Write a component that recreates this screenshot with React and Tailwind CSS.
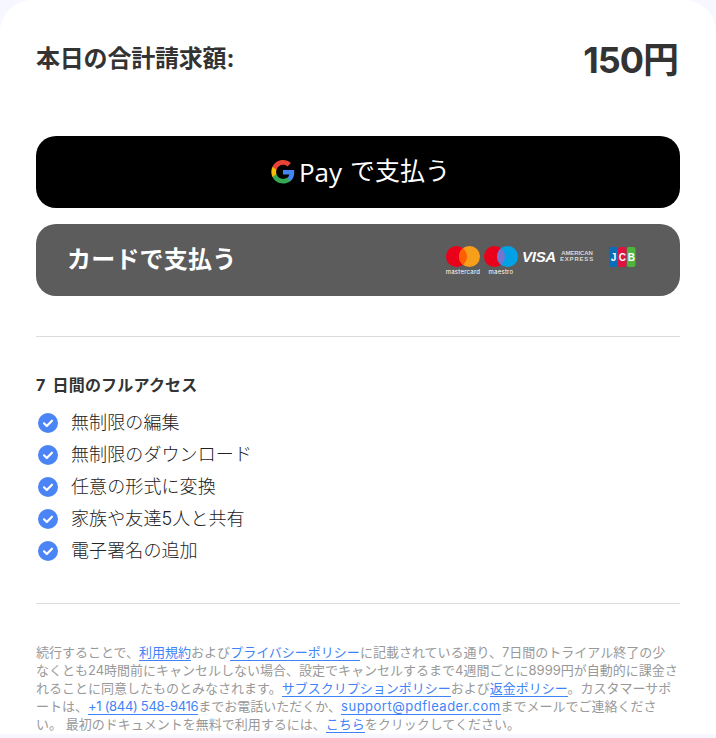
import React from "react";

const features = [
  "無制限の編集",
  "無制限のダウンロード",
  "任意の形式に変換",
  "家族や友達5人と共有",
  "電子署名の追加",
];

const font = "font-['Inter','Noto_Sans_CJK_JP',sans-serif]";

const GoogleG = () => (
  <svg width="24" height="24" viewBox="0 0 48 48">
    <path fill="#4285F4" d="M46.5 24.5c0-1.6-.1-3.1-.4-4.5H24v9h12.7c-.6 2.9-2.2 5.400-4.700 7v5.800h7.600c4.400-4.100 6.900-10.100 6.900-17.300z" />
    <path fill="#34A853" d="M24 47c6.300 0 11.600-2.100 15.600-5.700L32 35.500c-2.100 1.400-4.800 2.300-8 2.300-6.100 0-11.300-4.100-13.100-9.700H3v6C7 42 14.900 47 24 47z" />
    <path fill="#FBBC05" d="M10.900 28.100c-.5-1.400-.7-2.900-.7-4.400s.3-3 .7-4.400v-6H3C1.500 16.500.6 20 .6 23.700s.9 7.200 2.400 10.400l7.900-6z" />
    <path fill="#EA4335" d="M24 9.500c3.500 0 6.600 1.200 9 3.500l6.800-6.800C35.600 2.400 30.300 0 24 0 14.900 0 7 5.300 3 13.300l7.900 6C12.700 13.700 17.900 9.500 24 9.500z" />
  </svg>
);

const Check = () => (
  <svg width="20" height="20" viewBox="0 0 20 20" className="shrink-0 mt-[2px]">
    <circle cx="10" cy="10" r="10" fill="#4a84f5" />
    <path d="M6 10.300l2.800 2.700L14 7.700" fill="none" stroke="#fff" strokeWidth="2.200" strokeLinecap="round" strokeLinejoin="round" />
  </svg>
);

const Cards = () => (
  <div className="flex items-center">
    <div className="flex flex-col items-center w-[34px]">
      <svg width="34" height="21" viewBox="0 0 34 21">
        <circle cx="10.500" cy="10.500" r="10.500" fill="#eb001b" />
        <circle cx="23.500" cy="10.500" r="10.500" fill="#f79e1b" />
        <path d="M17 2.300a10.500 10.500 0 0 1 0 16.400a10.500 10.500 0 0 1 0-16.400z" fill="#ff5f00" />
      </svg>
      <span className="text-[6px] leading-[7px] tracking-[0.25px] text-white mt-[1px] font-['Inter',sans-serif]">mastercard</span>
    </div>
    <div className="flex flex-col items-center w-[34px] ml-[4px]">
      <svg width="34" height="21" viewBox="0 0 34 21">
        <circle cx="10.500" cy="10.500" r="10.500" fill="#eb001b" />
        <circle cx="23.500" cy="10.500" r="10.500" fill="#00a2e5" />
        <path d="M17 2.300a10.500 10.500 0 0 1 0 16.400a10.500 10.500 0 0 1 0-16.400z" fill="#7375cf" />
      </svg>
      <span className="text-[6px] leading-[7px] tracking-[0.25px] text-white mt-[1px] font-['Inter',sans-serif]">maestro</span>
    </div>
    <span className="w-[34px] ml-[4px] mb-[8px] text-white text-[15px] leading-none font-extrabold italic tracking-[-0.3px] font-['Liberation_Sans',sans-serif]">VISA</span>
    <div className="w-[34px] ml-[4px] mb-[8px] flex flex-col items-center text-[#d8d8d8] text-[6px] leading-[6px] font-bold font-['Liberation_Sans',sans-serif]">
      <span className="tracking-[-0.1px]">AMERICAN</span>
      <span className="tracking-[0.8px]">EXPRESS</span>
    </div>
    <svg width="27" height="20" viewBox="0 0 27 20" className="ml-[15px] mb-[6px]">
      <rect x="0" y="0" width="8.500" height="20" rx="2" fill="#0b6cb8" />
      <rect x="9" y="0" width="8.500" height="20" rx="2" fill="#e0123f" />
      <rect x="18" y="0" width="8.500" height="20" rx="2" fill="#4fb43c" />
      <text x="4.500" y="14" fontSize="10" fontWeight="700" fill="#fff" textAnchor="middle" fontFamily="Liberation Sans">J</text>
      <text x="13.300" y="14" fontSize="10" fontWeight="700" fill="#fff" textAnchor="middle" fontFamily="Liberation Sans">C</text>
      <text x="22.300" y="14" fontSize="10" fontWeight="700" fill="#fff" textAnchor="middle" fontFamily="Liberation Sans">B</text>
    </svg>
  </div>
);

const Link = ({ children, className = "" }) => (
  <a href="#" className={`text-[#3f83f8] border-b border-[#3f83f8] ${className}`}>{children}</a>
);

export default function App() {
  return (
    <div className={`h-[738px] w-[716px] overflow-hidden bg-[#f7f8ff] ${font}`}>
      <div className="h-[734px] bg-white rounded-t-[32px] px-[36px] pt-[38px]">
        <div className="flex justify-between items-start text-[#333]">
          <div className="text-[24px] leading-[42px] font-bold tracking-[-0.2px]">本日の合計請求額:</div>
          <div className="mr-[2px] text-[36px] leading-[44px] font-bold tracking-[-1px]">150円</div>
        </div>

        <button className="mt-[54px] w-full h-[72px] bg-black rounded-[20px] flex items-center justify-center pl-[5px] text-white">
          <GoogleG />
          <span className="ml-[4px] text-[26px] leading-none font-['Open_Sans',sans-serif]">Pay</span>
          <span className="ml-[8px] mb-[2px] text-[25px] leading-none">で支払う</span>
        </button>

        <button className="mt-[16px] w-full h-[72px] bg-[#5c5c5c] rounded-[20px] flex items-center justify-between pl-[31px] pr-[44px] text-white">
          <span className="text-[24px] font-bold tracking-[0.2px]">カードで支払う</span>
          <Cards />
        </button>

        <div className="mt-[40px] border-t border-[#dcdcdc]" />

        <div className="mt-[36px] text-[16px] leading-[24px] font-bold tracking-[0.2px] text-[#333]"><span className="mr-[3px]">7</span> 日間のフルアクセス</div>
        <ul className="mt-[9px]">
          {features.map((f) => (
            <li key={f} className="h-[32px] flex items-center pl-[2px] text-[18px] font-light tracking-[0.1px] text-[#222]">
              <Check />
              <span className="ml-[13px]">{f}</span>
            </li>
          ))}
        </ul>

        <div className="mt-[37px] border-t border-[#dcdcdc]" />

        <p className="mt-[39px] pr-[2px] text-[13px] leading-[18px] text-[#999]">
          続行することで、<Link>利用規約</Link>および<Link>プライバシーポリシー</Link>に記載されている通り、7日間のトライアル終了の少なくとも24時間前にキャンセルしない場合、設定でキャンセルするまで4週間ごとに8999円が自動的に課金されることに同意したものとみなされます。<Link>サブスクリプションポリシー</Link>および<Link>返金ポリシー</Link>。カスタマーサポートは、<Link className="tracking-[-0.3px]">+1 (844) 548-9416</Link>までお電話いただくか、<Link className="tracking-[0.5px]">support@pdfleader.com</Link>までメールでご連絡ください。 最初のドキュメントを無料で利用するには、<Link>こちら</Link>をクリックしてください。
        </p>
      </div>
    </div>
  );
}
